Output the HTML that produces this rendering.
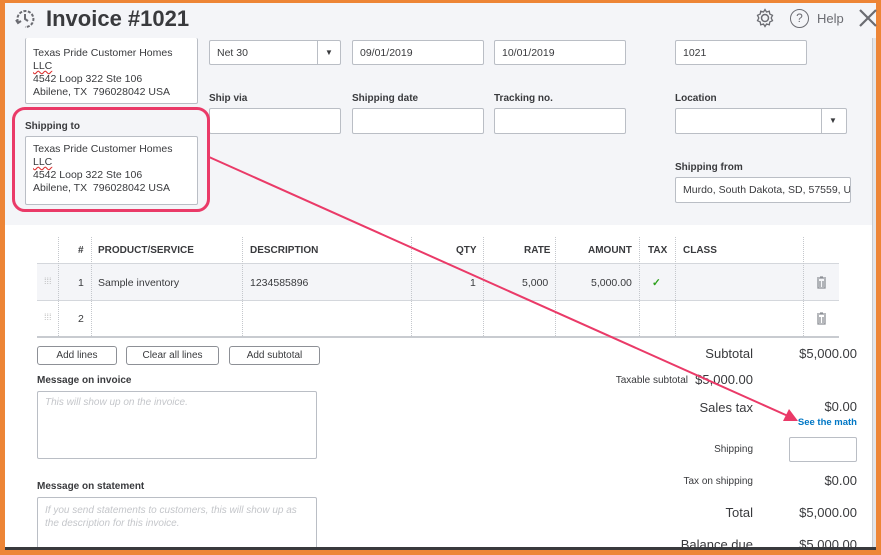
<!DOCTYPE html>
<html><head><meta charset="utf-8"><style>
*{margin:0;padding:0;box-sizing:border-box}
body{width:881px;height:555px;overflow:hidden;background:#ed8536;font-family:"Liberation Sans",sans-serif;color:#393a3d;position:relative}
.a{position:absolute}
.in{position:absolute;background:#fff;border:1px solid #babec5;border-radius:2px;font-size:10.5px;padding:6px 7px;color:#393a3d;white-space:nowrap;overflow:hidden}
.lb{position:absolute;font-size:10px;font-weight:bold;color:#393a3d}
.th{position:absolute;top:245px;font-size:10px;font-weight:bold}
.td{position:absolute;font-size:10.5px}
.vl{position:absolute;top:237px;height:99px;border-left:1px dotted #c4c7cc}
.btn{position:absolute;top:346px;height:19px;border:1px solid #8d9096;border-radius:3px;background:#fff;font-size:10px;text-align:center;line-height:17px}
.r{position:absolute;text-align:right;white-space:nowrap}
</style></head><body>
<div class="a" style="left:5px;top:3px;width:871px;height:544px;background:#fff"></div>
<div class="a" style="left:5px;top:3px;width:871px;height:222px;background:#f4f5f8"></div>
<div class="a" style="left:872px;top:38px;width:4px;height:509px;background:#e3e5e8;border-left:1px solid #c8cbd0"></div>

<svg class="a" style="left:14px;top:8px" width="22" height="22" viewBox="0 0 22 22"><path d="M4 14A8 8 0 1 1 11 19" fill="none" stroke="#6b6c72" stroke-width="2" stroke-dasharray="3 1.5"/><path d="M11 6v5l3 2" fill="none" stroke="#6b6c72" stroke-width="2"/><path d="M2 12l2 3 3-2" fill="none" stroke="#6b6c72" stroke-width="2"/></svg>
<div class="a" style="left:46px;top:6px;font-size:22px;font-weight:bold;color:#393a3d">Invoice #1021</div>
<svg class="a" style="left:755px;top:8px" width="20" height="20" viewBox="0 0 20 20"><circle cx="10" cy="10" r="3.5" fill="none" stroke="#6b6c72" stroke-width="1.5"/><path d="M10 1.5l1.5 2.5 2.8-.8.5 2.9 2.7 1.2-1.3 2.7 1.3 2.7-2.7 1.2-.5 2.9-2.8-.8L10 18.5 8.5 16l-2.8.8-.5-2.9L2.5 12.7 3.8 10 2.5 7.3l2.7-1.2.5-2.9 2.8.8z" fill="none" stroke="#6b6c72" stroke-width="1.3"/></svg>
<div class="a" style="left:790px;top:9px;width:19px;height:19px;border:1.5px solid #6b6c72;border-radius:50%;font-size:12px;text-align:center;line-height:16px;color:#6b6c72">?</div>
<div class="a" style="left:817px;top:11px;font-size:13px;color:#6b6c72">Help</div>
<svg class="a" style="left:858px;top:8px" width="20" height="20"><path d="M2 2L18 18M18 2L2 18" stroke="#6b6c72" stroke-width="2.2"/></svg>

<div class="in" style="left:25px;top:38px;width:173px;height:66px;line-height:13px;padding:9px 7px 0;border-top:none">Texas Pride Customer Homes<br><span style="text-decoration:underline wavy #d33">LLC</span><br>4542 Loop 322 Ste 106<br>Abilene, TX&nbsp; 796028042 USA</div>
<div class="in" style="left:209px;top:40px;width:132px;height:25px">Net 30</div>
<div class="a" style="left:317px;top:41px;height:23px;border-left:1px solid #babec5"></div>
<div class="a" style="left:325px;top:48px;font-size:8px">▼</div>
<div class="in" style="left:352px;top:40px;width:132px;height:25px">09/01/2019</div>
<div class="in" style="left:494px;top:40px;width:132px;height:25px">10/01/2019</div>
<div class="in" style="left:675px;top:40px;width:132px;height:25px">1021</div>

<div class="lb" style="left:209px;top:93px">Ship via</div>
<div class="lb" style="left:352px;top:93px">Shipping date</div>
<div class="lb" style="left:494px;top:93px">Tracking no.</div>
<div class="lb" style="left:675px;top:93px">Location</div>
<div class="in" style="left:209px;top:108px;width:132px;height:26px"></div>
<div class="in" style="left:352px;top:108px;width:132px;height:26px"></div>
<div class="in" style="left:494px;top:108px;width:132px;height:26px"></div>
<div class="in" style="left:675px;top:108px;width:172px;height:26px"></div>
<div class="a" style="left:821px;top:109px;height:24px;border-left:1px solid #babec5"></div>
<div class="a" style="left:829px;top:116px;font-size:8px">▼</div>

<div class="lb" style="left:25px;top:121px">Shipping to</div>
<div class="in" style="left:25px;top:136px;width:173px;height:69px;line-height:13px">Texas Pride Customer Homes<br><span style="text-decoration:underline wavy #d33">LLC</span><br>4542 Loop 322 Ste 106<br>Abilene, TX&nbsp; 796028042 USA</div>
<div class="a" style="left:12px;top:107px;width:198px;height:105px;border:3px solid #ea3a68;border-radius:13px"></div>

<div class="lb" style="left:675px;top:162px">Shipping from</div>
<div class="in" style="left:675px;top:177px;width:176px;height:26px">Murdo, South Dakota, SD, 57559, U</div>

<div class="a" style="left:37px;top:263px;width:802px;height:1px;background:#d4d7dc"></div>
<div class="a" style="left:37px;top:264px;width:802px;height:36px;background:#f4f5f8"></div>
<div class="a" style="left:37px;top:300px;width:802px;height:1px;background:#d4d7dc"></div>
<div class="a" style="left:37px;top:336px;width:802px;height:2px;background:#c8cbd0"></div>
<div class="vl" style="left:58px"></div><div class="vl" style="left:91px"></div><div class="vl" style="left:242px"></div><div class="vl" style="left:411px"></div><div class="vl" style="left:483px"></div><div class="vl" style="left:555px"></div><div class="vl" style="left:639px"></div><div class="vl" style="left:675px"></div><div class="vl" style="left:803px"></div>
<div class="th" style="left:78px">#</div>
<div class="th" style="left:98px">PRODUCT/SERVICE</div>
<div class="th" style="left:250px">DESCRIPTION</div>
<div class="th" style="left:456px">QTY</div>
<div class="th" style="left:524px">RATE</div>
<div class="th" style="left:588px">AMOUNT</div>
<div class="th" style="left:648px">TAX</div>
<div class="th" style="left:683px">CLASS</div>
<div class="td" style="left:44px;top:276px;color:#bbb;font-size:9px">⁞⁞⁞</div>
<div class="td" style="left:44px;top:312px;color:#bbb;font-size:9px">⁞⁞⁞</div>
<div class="td" style="left:78px;top:277px">1</div>
<div class="td" style="left:78px;top:313px">2</div>
<div class="td" style="left:98px;top:277px">Sample inventory</div>
<div class="td" style="left:250px;top:277px">1234585896</div>
<div class="td" style="left:470px;top:277px">1</div>
<div class="td" style="left:522px;top:277px">5,000</div>
<div class="td" style="left:591px;top:277px">5,000.00</div>
<div class="td" style="left:652px;top:277px;color:#2ca01c;font-weight:bold">✓</div>
<svg class="a" style="left:816px;top:276px" width="11" height="13"><path d="M1 2h9M4 1h3M2 3v9h7V3M4 5v6M7 5v6" fill="none" stroke="#8d9096" stroke-width="1.3"/></svg>
<svg class="a" style="left:816px;top:312px" width="11" height="13"><path d="M1 2h9M4 1h3M2 3v9h7V3M4 5v6M7 5v6" fill="none" stroke="#8d9096" stroke-width="1.3"/></svg>

<div class="btn" style="left:37px;width:80px">Add lines</div>
<div class="btn" style="left:126px;width:93px">Clear all lines</div>
<div class="btn" style="left:229px;width:91px">Add subtotal</div>

<div class="lb" style="left:37px;top:375px">Message on invoice</div>
<div class="in" style="left:37px;top:391px;width:280px;height:68px;color:#c4c6ca;font-style:italic;font-size:10px;padding:5px 7px">This will show up on the invoice.</div>
<div class="lb" style="left:37px;top:481px">Message on statement</div>
<div class="in" style="left:37px;top:497px;width:280px;height:52px;color:#c4c6ca;font-style:italic;font-size:10px;padding:6px 7px;line-height:13px;white-space:normal">If you send statements to customers, this will show up as the description for this invoice.</div>

<div class="r" style="right:128px;top:346px;font-size:13px">Subtotal</div>
<div class="r" style="right:24px;top:346px;font-size:13px">$5,000.00</div>
<div class="r" style="right:193px;top:375px;font-size:10px">Taxable subtotal</div>
<div class="r" style="right:128px;top:372px;font-size:13px">$5,000.00</div>
<div class="r" style="right:128px;top:400px;font-size:13px">Sales tax</div>
<div class="r" style="right:24px;top:399px;font-size:13px">$0.00</div>
<div class="r" style="right:24px;top:417px;font-size:9.5px;font-weight:bold;color:#0077c5">See the math</div>
<div class="r" style="right:128px;top:444px;font-size:10px">Shipping</div>
<div class="in" style="left:789px;top:437px;width:68px;height:25px"></div>
<div class="r" style="right:128px;top:476px;font-size:10px">Tax on shipping</div>
<div class="r" style="right:24px;top:473px;font-size:13px">$0.00</div>
<div class="r" style="right:128px;top:505px;font-size:13px">Total</div>
<div class="r" style="right:24px;top:505px;font-size:13px">$5,000.00</div>
<div class="r" style="right:128px;top:537px;font-size:13px">Balance due</div>
<div class="r" style="right:24px;top:537px;font-size:13px">$5,000.00</div>
<div class="a" style="left:5px;top:547px;width:871px;height:3px;background:#393a3d"></div>
<div class="a" style="left:0;top:550px;width:881px;height:5px;background:#ed8536"></div>

<svg class="a" style="left:0;top:0" width="881" height="555"><line x1="209" y1="157" x2="788" y2="416" stroke="#ea3a68" stroke-width="2"/><path d="M798 421L783 421L789 409Z" fill="#ea3a68"/></svg>
</body></html>
